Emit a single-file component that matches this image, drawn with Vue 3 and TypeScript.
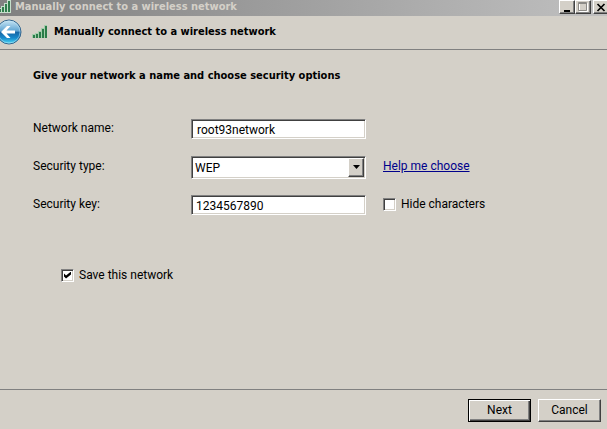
<script setup lang="ts">
import { ref } from 'vue'

const title = 'Manually connect to a wireless network'
const networkName = ref('root93network')
const securityType = ref('WEP')
const securityKey = ref('1234567890')
const hideCharacters = ref(false)
const saveNetwork = ref(true)
const securityTypes = ['No authentication (Open)', 'WEP', 'WPA2-Personal', 'WPA-Personal']
</script>

<template>
  <form class="wizard" @submit.prevent>
    <header class="titlebar">
      <svg class="titlebar-icon" viewBox="0 0 12 14" aria-hidden="true">
        <g fill="#2f7d4c" stroke="#c4dfca" stroke-width="1">
          <rect x="-1.5" y="8.5" width="3" height="4" />
          <rect x="1.5" y="6.5" width="3" height="6" />
          <rect x="4.5" y="3.5" width="3" height="9" />
          <rect x="7.5" y="0.5" width="3" height="12" />
        </g>
      </svg>
      <span class="titlebar-text">{{ title }}</span>
      <div class="window-buttons">
        <button type="button" class="window-button" aria-label="Minimize">
          <svg viewBox="0 0 12 11"><path d="M3 8h6v2H3z" fill="#000" /></svg>
        </button>
        <button type="button" class="window-button" aria-label="Maximize" disabled>
          <svg viewBox="0 0 12 11">
            <path d="M2.5 1.5h8v8h-8z" fill="none" stroke="#fff" />
            <path d="M1.5 .5h8v8h-8zM2 1.5h7" fill="none" stroke="#8c8a86" />
          </svg>
        </button>
        <button type="button" class="window-button close" aria-label="Close">
          <svg viewBox="0 0 12 11"><path d="M2.5 2l7 7M9.500 2l-7 7" stroke="#000" stroke-width="1.700" /></svg>
        </button>
      </div>
    </header>

    <div class="heading">
      <button type="button" class="back" aria-label="Back">
        <svg viewBox="0 0 22 26">
          <defs>
            <linearGradient id="back-fill" x1="0" y1="0" x2="0" y2="1">
              <stop offset="0" stop-color="#c9e6f5" />
              <stop offset=".45" stop-color="#62a6d3" />
              <stop offset=".52" stop-color="#1768a8" />
              <stop offset=".75" stop-color="#1689cb" />
              <stop offset="1" stop-color="#54e0fa" />
            </linearGradient>
          </defs>
          <circle cx="9" cy="13" r="12" fill="url(#back-fill)" stroke="#34658d" />
          <circle cx="9" cy="13" r="11" fill="none" stroke="#c5e8f6" stroke-opacity=".5" />
          <path d="M1 13L7 7h3.500L6.500 11.500H15v3H6.500L10.500 19H7z" fill="#fff" />
        </svg>
      </button>
      <svg class="signal" viewBox="0 0 15 14" aria-hidden="true">
        <g fill="#a3cdac">
          <rect x="0" y="9" width="3" height="4" />
          <rect x="3" y="8" width="3" height="5" />
          <rect x="6" y="6" width="3" height="7" />
          <rect x="9" y="3" width="3" height="10" />
          <rect x="12" y="0" width="3" height="13" />
        </g>
        <g fill="#2b7c49">
          <rect x="1" y="10" width="2" height="3" />
          <rect x="4" y="9" width="2" height="4" />
          <rect x="7" y="7" width="2" height="6" />
          <rect x="10" y="4" width="2" height="9" />
          <rect x="13" y="1" width="2" height="12" />
        </g>
      </svg>
      <h1>{{ title }}</h1>
    </div>

    <main class="content">
      <h2>Give your network a name and choose security options</h2>
      <div class="fields">
        <label for="network-name">Network name:</label>
        <input id="network-name" v-model="networkName" class="text-box name-box" type="text" />
        <span></span>

        <label for="security-type">Security type:</label>
        <div class="combo">
          <select id="security-type" v-model="securityType">
            <option v-for="item in securityTypes" :key="item">{{ item }}</option>
          </select>
          <span class="combo-arrow" aria-hidden="true">
            <svg viewBox="0 0 7 4"><path d="M0 0h7L3.500 4z" /></svg>
          </span>
        </div>
        <a href="#">Help me choose</a>

        <label for="security-key">Security key:</label>
        <input id="security-key" v-model="securityKey" class="text-box" :type="hideCharacters ? 'password' : 'text'" />
        <label class="check"><input v-model="hideCharacters" type="checkbox" />Hide characters</label>
      </div>
      <label class="check save"><input v-model="saveNetwork" type="checkbox" />Save this network</label>
    </main>

    <footer class="actions">
      <button type="submit" class="push default"><span>Next</span></button>
      <button type="button" class="push"><span>Cancel</span></button>
    </footer>
  </form>
</template>

<style>
body {
  background: #d4d0c8;
}
</style>

<style scoped>
* {
  box-sizing: border-box;
}

.wizard {
  display: flex;
  flex-direction: column;
  min-height: 100vh;
  overflow: hidden;
  background: #d4d0c8;
  color: #000;
  font: 12px/16px Roboto, "Noto Sans", sans-serif;
}

button,
input,
select {
  margin: 0;
  font: inherit;
  color: inherit;
}

svg {
  display: block;
}

.titlebar {
  display: flex;
  height: 16px;
  overflow: hidden;
  background: linear-gradient(90deg, #808080, #c0c0c0);
}

.titlebar-icon {
  width: 12px;
  height: 14px;
  margin-right: 3px;
}

.titlebar-text {
  flex: 1;
  color: #d4d0c8;
  font: bold 11px/14px "DejaVu Sans Condensed", "Noto Sans", sans-serif;
  white-space: nowrap;
}

.window-buttons {
  display: flex;
  margin-right: -2px;
}

.window-button {
  width: 16px;
  height: 14px;
  padding: 1px;
  background: #d4d0c8;
  border: 1px solid;
  border-color: #fff #404040 #404040 #fff;
  box-shadow: inset -1px -1px #808080;
}

.window-button svg {
  width: 12px;
  height: 11px;
}

.close {
  margin-left: 2px;
}

.heading {
  display: flex;
  align-items: center;
  height: 34px;
  padding-bottom: 2px;
  border-bottom: 1px solid #808080;
}

.back {
  width: 22px;
  height: 26px;
  padding: 0;
  background: none;
  border: 0;
}

.back svg {
  width: 22px;
  height: 26px;
}

.signal {
  width: 15px;
  height: 14px;
  margin: 0 7px 0 10px;
}

h1,
h2 {
  margin: 0;
  font: bold 11px/16px "DejaVu Sans Condensed", "Noto Sans", sans-serif;
}

.content {
  flex: 1;
  padding: 18px 33px;
}

.fields {
  display: grid;
  grid-template-columns: 158px 175px 1fr;
  grid-auto-rows: 38px;
  align-items: center;
  margin-top: 26px;
}

.fields > label,
.fields > a {
  padding-bottom: 2px;
}

.fields > a,
.fields > .check {
  justify-self: start;
  margin-left: 17px;
}

.fields > a {
  color: #00008b;
}

.text-box,
.combo {
  width: 100%;
  background: #fff;
  border: 1px solid;
  border-color: #808080 #fff #fff #808080;
  box-shadow: inset 1px 1px #404040, inset -1px -1px #d4d0c8;
}

.text-box {
  height: 20px;
  padding: 1px 4px 0;
  outline: none;
}

.name-box {
  padding-left: 5px;
}

.combo {
  display: grid;
  grid-template-columns: 1fr 16px;
  height: 23px;
  padding: 1px;
}

.combo select {
  grid-area: 1 / 1 / 2 / 3;
  width: 100%;
  padding: 1px 2px 0;
  appearance: none;
  background: none;
  border: 0;
  outline: none;
}

.combo-arrow {
  grid-area: 1 / 2;
  display: grid;
  place-items: center;
  background: #d4d0c8;
  border: 1px solid;
  border-color: #fff #404040 #404040 #fff;
  box-shadow: inset -1px -1px #808080;
  pointer-events: none;
}

.combo-arrow svg {
  width: 7px;
  height: 4px;
}

.check {
  display: flex;
  align-items: center;
  gap: 5px;
}

.check input {
  display: grid;
  place-items: center;
  width: 13px;
  height: 13px;
  appearance: none;
  background: #fff;
  border: 1px solid;
  border-color: #808080 #fff #fff #808080;
  box-shadow: inset 1px 1px #404040, inset -1px -1px #d4d0c8;
}

.check input:checked::before {
  content: "";
  width: 7px;
  height: 7px;
  background: #000;
  clip-path: polygon(0 29%, 0 72%, 29% 100%, 100% 43%, 100% 0, 29% 57%);
}

.save {
  width: fit-content;
  margin: 43px 0 0 28px;
}

.actions {
  display: flex;
  justify-content: flex-end;
  gap: 7px;
  padding: 9px 6px 7px;
  border-top: 1px solid #808080;
}

.push {
  width: 63px;
  height: 23px;
  padding: 0 0 1px;
  background: #d4d0c8;
  border: 1px solid;
  border-color: #fff #404040 #404040 #fff;
  box-shadow: inset -1px -1px #808080;
}

.default {
  border-color: #000;
  box-shadow: inset 1px 1px #fff, inset -1px -1px #404040, inset -2px -2px #808080;
}
</style>
